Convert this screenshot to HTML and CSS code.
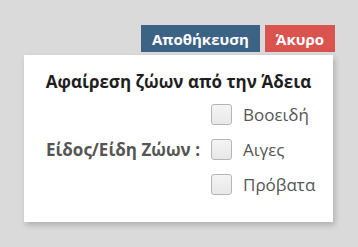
FILE: index.html
```html
<!DOCTYPE html>
<html>
  <head>
    <meta name="viewport" content="width=device-width, initial-scale=1" />
    <link rel="stylesheet" href="styles.css">
  </head>
  <body>
    <div class="page">
      <div class="actions">
        <button class="btn btn_save">Αποθήκευση</button>
        <button class="btn btn_cancel">Άκυρο</button>
      </div>
      <div class="card">
        <h1 class="card_title">Αφαίρεση ζώων από την Άδεια</h1>
        <div class="field">
          <div class="field_label">Είδος/Είδη Ζώων :</div>
          <div class="field_options">
            <label class="option"><span class="check"></span>Βοοειδή</label>
            <label class="option"><span class="check"></span>Αιγες</label>
            <label class="option"><span class="check"></span>Πρόβατα</label>
          </div>
        </div>
      </div>
    </div>
  </body>
</html>
```
FILE: styles.css
```css
body {
  margin: 0;
  background-color: #dadada;
  font-family: "Open Sans", "Liberation Sans", sans-serif;
}

.page {
  height: 247px;
  box-sizing: border-box;
  padding-top: 25px;
}

.actions {
  display: flex;
  justify-content: flex-end;
  gap: 5px;
  padding-right: 23px;
}

.btn {
  border: none;
  color: white;
  font-family: "Open Sans", "Liberation Sans", sans-serif;
  font-weight: bold;
  font-size: 15px;
  height: 27px;
  padding: 0 11px;
  cursor: pointer;
}

.btn_save {
  background-color: #3c6384;
}

.btn_cancel {
  background-color: #d9534f;
}

.card {
  margin: 3px 25px 0 24px;
  height: 167px;
  box-sizing: border-box;
  background: white;
  box-shadow: 2px 3px 6px rgba(0, 0, 0, 0.2);
  padding-top: 15px;
}

.card_title {
  margin: 0;
  text-align: center;
  font-size: 17px;
  line-height: 24px;
  color: #1e1e1e;
}

.field {
  display: flex;
  align-items: center;
  margin-top: 3px;
}

.field_label {
  width: 176px;
  text-align: right;
  font-weight: bold;
  font-size: 17px;
  color: #555;
}

.field_options {
  display: flex;
  flex-direction: column;
  padding-left: 11px;
}

.option {
  display: flex;
  align-items: center;
  height: 35px;
  font-size: 17px;
  color: #555;
}

.check {
  width: 19px;
  height: 19px;
  border: 1px solid #b5b5b5;
  border-radius: 3px;
  background: linear-gradient(#f4f4f4, #e8e8e8);
  margin-right: 11px;
}
```
